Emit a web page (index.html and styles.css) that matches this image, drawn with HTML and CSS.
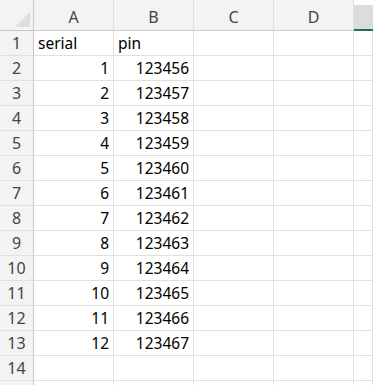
FILE: index.html
```html
<!DOCTYPE html>
<html lang="en">
<head>
    <meta charset="UTF-8">
    <title>Sheet1</title>
    <link rel="stylesheet" href="styles.css">
</head>
<body>
<div class="sheet">
    <div class="corner"><span class="tri"></span></div>
    <div class="colhead">A</div>
    <div class="colhead">B</div>
    <div class="colhead">C</div>
    <div class="colhead">D</div>
    <div class="colhead sel"></div>

    <div class="rowhead">1</div><div class="cell">serial</div><div class="cell">pin</div><div class="cell"></div><div class="cell"></div><div class="cell"></div>
    <div class="rowhead">2</div><div class="cell num">1</div><div class="cell num">123456</div><div class="cell"></div><div class="cell"></div><div class="cell"></div>
    <div class="rowhead">3</div><div class="cell num">2</div><div class="cell num">123457</div><div class="cell"></div><div class="cell"></div><div class="cell"></div>
    <div class="rowhead">4</div><div class="cell num">3</div><div class="cell num">123458</div><div class="cell"></div><div class="cell"></div><div class="cell"></div>
    <div class="rowhead">5</div><div class="cell num">4</div><div class="cell num">123459</div><div class="cell"></div><div class="cell"></div><div class="cell"></div>
    <div class="rowhead">6</div><div class="cell num">5</div><div class="cell num">123460</div><div class="cell"></div><div class="cell"></div><div class="cell"></div>
    <div class="rowhead">7</div><div class="cell num">6</div><div class="cell num">123461</div><div class="cell"></div><div class="cell"></div><div class="cell"></div>
    <div class="rowhead">8</div><div class="cell num">7</div><div class="cell num">123462</div><div class="cell"></div><div class="cell"></div><div class="cell"></div>
    <div class="rowhead">9</div><div class="cell num">8</div><div class="cell num">123463</div><div class="cell"></div><div class="cell"></div><div class="cell"></div>
    <div class="rowhead">10</div><div class="cell num">9</div><div class="cell num">123464</div><div class="cell"></div><div class="cell"></div><div class="cell"></div>
    <div class="rowhead">11</div><div class="cell num">10</div><div class="cell num">123465</div><div class="cell"></div><div class="cell"></div><div class="cell"></div>
    <div class="rowhead">12</div><div class="cell num">11</div><div class="cell num">123466</div><div class="cell"></div><div class="cell"></div><div class="cell"></div>
    <div class="rowhead">13</div><div class="cell num">12</div><div class="cell num">123467</div><div class="cell"></div><div class="cell"></div><div class="cell"></div>
    <div class="rowhead">14</div><div class="cell"></div><div class="cell"></div><div class="cell"></div><div class="cell"></div><div class="cell"></div>
    <div class="rowhead"></div><div class="cell"></div><div class="cell"></div><div class="cell"></div><div class="cell"></div><div class="cell"></div>
</div>
</body>
</html>
```
FILE: styles.css
```css
body {
    margin: 0;
    background: #fff;
    overflow: hidden;
    font-family: "Noto Sans", "Open Sans", sans-serif;
}

.sheet {
    display: grid;
    grid-template-columns: 34px 80px 80px 80px 80px 1fr;
    grid-template-rows: 31px repeat(15, 25px);
    width: 373px;
    height: 385px;
    overflow: hidden;
}

.sheet > div {
    box-sizing: border-box;
}

.corner {
    background: #f3f3f3;
    border-right: 1px solid #c8c8c8;
    border-bottom: 1px solid #c8c8c8;
    display: flex;
    justify-content: flex-end;
    align-items: flex-end;
    padding: 0 3px 3px 0;
}

.tri {
    width: 0;
    height: 0;
    border-left: 15px solid transparent;
    border-bottom: 15px solid #dfdfdf;
}

.colhead {
    background: #f3f3f3;
    border-right: 1px solid #e0e0e0;
    border-bottom: 1px solid #c8c8c8;
    color: #444;
    font-size: 16px;
    display: flex;
    align-items: center;
    justify-content: center;
    padding-top: 4px;
}

.colhead.sel {
    background: #dcdcdc;
    border-top: 5px solid #fff;
    border-right: none;
    border-bottom: 2px solid #217346;
}

.rowhead {
    background: #f3f3f3;
    border-right: 1px solid #c8c8c8;
    border-bottom: 1px solid #e0e0e0;
    color: #444;
    font-size: 16px;
    display: flex;
    align-items: center;
    justify-content: center;
    padding-bottom: 1px;
}

.cell {
    border-right: 1px solid #e0e0e0;
    border-bottom: 1px solid #e0e0e0;
    color: #000;
    font-size: 15.5px;
    display: flex;
    align-items: center;
    padding: 0 4px 1px 4px;
    white-space: nowrap;
}

.cell.num {
    justify-content: flex-end;
}
```
